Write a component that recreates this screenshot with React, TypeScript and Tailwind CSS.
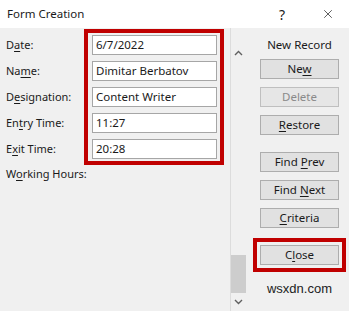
import { X } from "lucide-react";

const fields = [
  { pre: "D", key: "a", post: "te:", value: "6/7/2022" },
  { pre: "Na", key: "m", post: "e:", value: "Dimitar Berbatov" },
  { pre: "D", key: "e", post: "signation:", value: "Content Writer" },
  { pre: "En", key: "t", post: "ry Time:", value: "11:27" },
  { pre: "E", key: "x", post: "it Time:", value: "20:28" },
];

const Btn = ({
  pre,
  k,
  post,
  disabled,
}: {
  pre: string;
  k: string;
  post: string;
  disabled?: boolean;
}) => (
  <div
    className={`h-[20px] w-[79px] flex items-center justify-center border text-[11.5px] ${
      disabled
        ? "border-[#bfbfbf] bg-[#e6e6e6] text-[#8a8a8a]"
        : "border-[#adadad] bg-[#e1e1e1] text-[#1a1a1a]"
    }`}
  >
    <span className="whitespace-pre">
      {pre}
      {k && <span className="underline underline-offset-2">{k}</span>}
      {post}
    </span>
  </div>
);

const App = () => {
  return (
    <div className="w-[349px] h-[311px] flex flex-col bg-[#f0f0f0] text-[11px] text-[#1a1a1a] font-['Noto_Sans',sans-serif] overflow-hidden">
      {/* Title bar */}
      <div className="h-[28px] bg-white flex items-center pl-[7px] pr-[14px] shrink-0">
        <span className="flex-1 text-[11.5px]">Form Creation</span>
        <span className="text-[14px] mr-[36px]">?</span>
        <X className="w-[14px] h-[14px]" strokeWidth={1.2} />
      </div>

      <div className="flex flex-1">
        {/* Fields */}
        <div className="w-[230px] flex flex-col">
          <div className="flex">
            <div className="w-[84px] pl-[6px] pt-[7px] flex flex-col gap-[6px]">
              {fields.map((f) => (
                <div key={f.value} className="h-[20px] flex items-center">
                  <span>
                    {f.pre}
                    <span className="underline underline-offset-2">{f.key}</span>
                    {f.post}
                  </span>
                </div>
              ))}
            </div>
            <div className="mt-[1px] w-[140px] border-4 border-[#c00000] pl-[4px] pr-[3px] pt-[2px] pb-[2px] flex flex-col gap-[6px]">
              {fields.map((f) => (
                <div
                  key={f.value}
                  className="h-[20px] bg-white border border-[#a6a6a6] flex items-center pl-[3px] text-[11.5px]"
                >
                  {f.value}
                </div>
              ))}
            </div>
          </div>
          <div className="pl-[6px] mt-[1px]">
            W<span className="underline underline-offset-2">o</span>rking Hours:
          </div>
        </div>

        {/* Scrollbar */}
        <div className="w-[16px] border-l border-[#dcdcdc] flex flex-col items-center pb-[6px]">
          <svg width="9" height="6" viewBox="0 0 9 6" className="mt-[22px]">
            <path d="M1 5 L4.5 1.5 L8 5" fill="none" stroke="#606060" strokeWidth="1.4" />
          </svg>
          <div className="flex-1" />
          <div className="w-[15px] h-[38px] bg-[#cdcdcd]" />
          <svg width="9" height="6" viewBox="0 0 9 6" className="mt-[6px]">
            <path d="M1 1 L4.5 4.5 L8 1" fill="none" stroke="#606060" strokeWidth="1.4" />
          </svg>
        </div>

        {/* Buttons */}
        <div className="flex-1 flex flex-col items-center pl-[4px]">
          <div className="mt-[9px] h-[16px] flex items-center text-[11.5px]">New Record</div>
          <div className="mt-[6px] flex flex-col gap-[8px]">
            <Btn pre="Ne" k="w" post="" />
            <Btn pre="Delete" k="" post="" disabled />
            <Btn pre="" k="R" post="estore" />
          </div>
          <div className="mt-[17px] flex flex-col gap-[8px]">
            <Btn pre="Find " k="P" post="rev" />
            <Btn pre="Find " k="N" post="ext" />
            <Btn pre="" k="C" post="riteria" />
          </div>
          <div className="mt-[10px] border-4 border-[#c00000] p-[3px]">
            <Btn pre="C" k="l" post="ose" />
          </div>
          <div className="mt-[7px] text-[13px] text-[#222] font-['Liberation_Sans',sans-serif]">
            wsxdn.com
          </div>
        </div>
      </div>
    </div>
  );
};

export default App;
